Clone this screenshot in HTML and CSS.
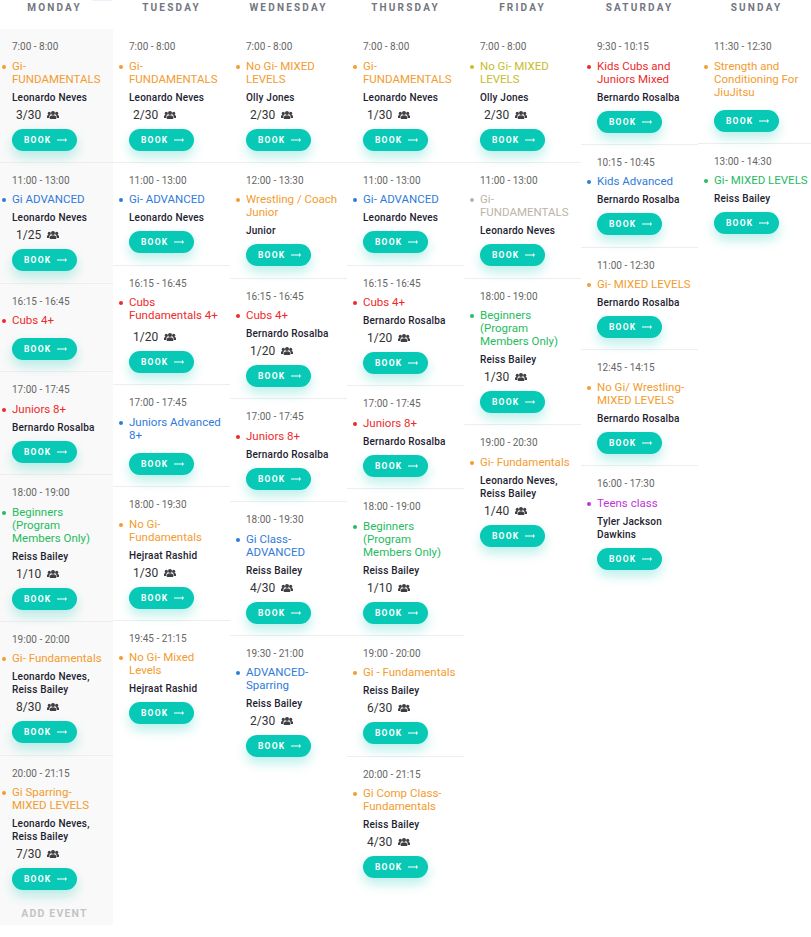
FILE: index.html
```html
<!DOCTYPE html>
<html lang="en">
<head>
<meta charset="utf-8">
<title>Timetable</title>
<link rel="stylesheet" href="styles.css">
</head>
<body>
<svg class="defs" width="0" height="0" aria-hidden="true">
<symbol id="users" viewBox="0 0 12 8"><circle cx="6" cy="2" r="2"/><circle cx="2.300" cy="2.400" r="1.600"/><circle cx="9.700" cy="2.400" r="1.600"/><path d="M2.800 8V6.200C2.800 4.900 4.200 4.200 6 4.200S9.200 4.900 9.200 6.200V8Z"/><path d="M0 7V5.400C0 4.500.9 4 2.300 4L3 4.300C2.500 4.800 2.300 5.300 2.300 5.900V7ZM12 7V5.400C12 4.500 11.100 4 9.700 4L9 4.300C9.500 4.800 9.700 5.300 9.700 5.900V7Z"/></symbol>
<symbol id="arrow" viewBox="0 0 10 6"><path d="M0 2.500h8V1L10 3 8 5V3.500H0Z"/></symbol>
</svg>
<div class="tab"></div>
<main class="timetable">

<section class="day day-shaded">
<h2 class="day-name">Monday</h2>
<div class="events">
<article class="event"><p class="time">7:00 - 8:00</p><h3 class="title orange">Gi- FUNDAMENTALS</h3><p class="teacher">Leonardo Neves</p><p class="cap">3/30 <svg class="ico"><use href="#users"/></svg></p><a class="book">BOOK <svg class="arr"><use href="#arrow"/></svg></a></article>
<article class="event"><p class="time">11:00 - 13:00</p><h3 class="title blue">Gi ADVANCED</h3><p class="teacher">Leonardo Neves</p><p class="cap">1/25 <svg class="ico"><use href="#users"/></svg></p><a class="book">BOOK <svg class="arr"><use href="#arrow"/></svg></a></article>
<article class="event"><p class="time">16:15 - 16:45</p><h3 class="title red">Cubs 4+</h3><a class="book">BOOK <svg class="arr"><use href="#arrow"/></svg></a></article>
<article class="event"><p class="time">17:00 - 17:45</p><h3 class="title red">Juniors 8+</h3><p class="teacher">Bernardo Rosalba</p><a class="book">BOOK <svg class="arr"><use href="#arrow"/></svg></a></article>
<article class="event"><p class="time">18:00 - 19:00</p><h3 class="title green">Beginners (Program Members Only)</h3><p class="teacher">Reiss Bailey</p><p class="cap">1/10 <svg class="ico"><use href="#users"/></svg></p><a class="book">BOOK <svg class="arr"><use href="#arrow"/></svg></a></article>
<article class="event"><p class="time">19:00 - 20:00</p><h3 class="title orange">Gi- Fundamentals</h3><p class="teacher">Leonardo Neves, Reiss Bailey</p><p class="cap">8/30 <svg class="ico"><use href="#users"/></svg></p><a class="book">BOOK <svg class="arr"><use href="#arrow"/></svg></a></article>
<article class="event event-last"><p class="time">20:00 - 21:15</p><h3 class="title orange">Gi Sparring- MIXED LEVELS</h3><p class="teacher">Leonardo Neves, Reiss Bailey</p><p class="cap">7/30 <svg class="ico"><use href="#users"/></svg></p><a class="book">BOOK <svg class="arr"><use href="#arrow"/></svg></a></article>
</div>
<p class="add">ADD EVENT</p>
</section>

<section class="day">
<h2 class="day-name">Tuesday</h2>
<div class="events">
<article class="event"><p class="time">7:00 - 8:00</p><h3 class="title orange">Gi- FUNDAMENTALS</h3><p class="teacher">Leonardo Neves</p><p class="cap">2/30 <svg class="ico"><use href="#users"/></svg></p><a class="book">BOOK <svg class="arr"><use href="#arrow"/></svg></a></article>
<article class="event"><p class="time">11:00 - 13:00</p><h3 class="title blue">Gi- ADVANCED</h3><p class="teacher">Leonardo Neves</p><a class="book">BOOK <svg class="arr"><use href="#arrow"/></svg></a></article>
<article class="event"><p class="time">16:15 - 16:45</p><h3 class="title red">Cubs Fundamentals 4+</h3><p class="cap">1/20 <svg class="ico"><use href="#users"/></svg></p><a class="book">BOOK <svg class="arr"><use href="#arrow"/></svg></a></article>
<article class="event"><p class="time">17:00 - 17:45</p><h3 class="title blue">Juniors Advanced 8+</h3><a class="book">BOOK <svg class="arr"><use href="#arrow"/></svg></a></article>
<article class="event"><p class="time">18:00 - 19:30</p><h3 class="title orange">No Gi- Fundamentals</h3><p class="teacher">Hejraat Rashid</p><p class="cap">1/30 <svg class="ico"><use href="#users"/></svg></p><a class="book">BOOK <svg class="arr"><use href="#arrow"/></svg></a></article>
<article class="event event-last"><p class="time">19:45 - 21:15</p><h3 class="title orange">No Gi- Mixed Levels</h3><p class="teacher">Hejraat Rashid</p><a class="book">BOOK <svg class="arr"><use href="#arrow"/></svg></a></article>
</div>
</section>

<section class="day">
<h2 class="day-name">Wednesday</h2>
<div class="events">
<article class="event"><p class="time">7:00 - 8:00</p><h3 class="title orange">No Gi- MIXED LEVELS</h3><p class="teacher">Olly Jones</p><p class="cap">2/30 <svg class="ico"><use href="#users"/></svg></p><a class="book">BOOK <svg class="arr"><use href="#arrow"/></svg></a></article>
<article class="event"><p class="time">12:00 - 13:30</p><h3 class="title orange">Wrestling / Coach Junior</h3><p class="teacher">Junior</p><a class="book">BOOK <svg class="arr"><use href="#arrow"/></svg></a></article>
<article class="event"><p class="time">16:15 - 16:45</p><h3 class="title red">Cubs 4+</h3><p class="teacher">Bernardo Rosalba</p><p class="cap">1/20 <svg class="ico"><use href="#users"/></svg></p><a class="book">BOOK <svg class="arr"><use href="#arrow"/></svg></a></article>
<article class="event"><p class="time">17:00 - 17:45</p><h3 class="title red">Juniors 8+</h3><p class="teacher">Bernardo Rosalba</p><a class="book">BOOK <svg class="arr"><use href="#arrow"/></svg></a></article>
<article class="event"><p class="time">18:00 - 19:30</p><h3 class="title blue">Gi Class- ADVANCED</h3><p class="teacher">Reiss Bailey</p><p class="cap">4/30 <svg class="ico"><use href="#users"/></svg></p><a class="book">BOOK <svg class="arr"><use href="#arrow"/></svg></a></article>
<article class="event event-last"><p class="time">19:30 - 21:00</p><h3 class="title blue">ADVANCED- Sparring</h3><p class="teacher">Reiss Bailey</p><p class="cap">2/30 <svg class="ico"><use href="#users"/></svg></p><a class="book">BOOK <svg class="arr"><use href="#arrow"/></svg></a></article>
</div>
</section>

<section class="day">
<h2 class="day-name">Thursday</h2>
<div class="events">
<article class="event"><p class="time">7:00 - 8:00</p><h3 class="title orange">Gi- FUNDAMENTALS</h3><p class="teacher">Leonardo Neves</p><p class="cap">1/30 <svg class="ico"><use href="#users"/></svg></p><a class="book">BOOK <svg class="arr"><use href="#arrow"/></svg></a></article>
<article class="event"><p class="time">11:00 - 13:00</p><h3 class="title blue">Gi- ADVANCED</h3><p class="teacher">Leonardo Neves</p><a class="book">BOOK <svg class="arr"><use href="#arrow"/></svg></a></article>
<article class="event"><p class="time">16:15 - 16:45</p><h3 class="title red">Cubs 4+</h3><p class="teacher">Bernardo Rosalba</p><p class="cap">1/20 <svg class="ico"><use href="#users"/></svg></p><a class="book">BOOK <svg class="arr"><use href="#arrow"/></svg></a></article>
<article class="event"><p class="time">17:00 - 17:45</p><h3 class="title red">Juniors 8+</h3><p class="teacher">Bernardo Rosalba</p><a class="book">BOOK <svg class="arr"><use href="#arrow"/></svg></a></article>
<article class="event"><p class="time">18:00 - 19:00</p><h3 class="title green">Beginners (Program Members Only)</h3><p class="teacher">Reiss Bailey</p><p class="cap">1/10 <svg class="ico"><use href="#users"/></svg></p><a class="book">BOOK <svg class="arr"><use href="#arrow"/></svg></a></article>
<article class="event"><p class="time">19:00 - 20:00</p><h3 class="title orange">Gi - Fundamentals</h3><p class="teacher">Reiss Bailey</p><p class="cap">6/30 <svg class="ico"><use href="#users"/></svg></p><a class="book">BOOK <svg class="arr"><use href="#arrow"/></svg></a></article>
<article class="event event-last"><p class="time">20:00 - 21:15</p><h3 class="title orange">Gi Comp Class- Fundamentals</h3><p class="teacher">Reiss Bailey</p><p class="cap">4/30 <svg class="ico"><use href="#users"/></svg></p><a class="book">BOOK <svg class="arr"><use href="#arrow"/></svg></a></article>
</div>
</section>

<section class="day">
<h2 class="day-name">Friday</h2>
<div class="events">
<article class="event"><p class="time">7:00 - 8:00</p><h3 class="title olive">No Gi- MIXED LEVELS</h3><p class="teacher">Olly Jones</p><p class="cap">2/30 <svg class="ico"><use href="#users"/></svg></p><a class="book">BOOK <svg class="arr"><use href="#arrow"/></svg></a></article>
<article class="event"><p class="time">11:00 - 13:00</p><h3 class="title stone">Gi- FUNDAMENTALS</h3><p class="teacher">Leonardo Neves</p><a class="book">BOOK <svg class="arr"><use href="#arrow"/></svg></a></article>
<article class="event"><p class="time">18:00 - 19:00</p><h3 class="title green">Beginners (Program Members Only)</h3><p class="teacher">Reiss Bailey</p><p class="cap">1/30 <svg class="ico"><use href="#users"/></svg></p><a class="book">BOOK <svg class="arr"><use href="#arrow"/></svg></a></article>
<article class="event event-last"><p class="time">19:00 - 20:30</p><h3 class="title orange">Gi- Fundamentals</h3><p class="teacher">Leonardo Neves, Reiss Bailey</p><p class="cap">1/40 <svg class="ico"><use href="#users"/></svg></p><a class="book">BOOK <svg class="arr"><use href="#arrow"/></svg></a></article>
</div>
</section>

<section class="day">
<h2 class="day-name">Saturday</h2>
<div class="events">
<article class="event"><p class="time">9:30 - 10:15</p><h3 class="title red">Kids Cubs and Juniors Mixed</h3><p class="teacher">Bernardo Rosalba</p><a class="book">BOOK <svg class="arr"><use href="#arrow"/></svg></a></article>
<article class="event"><p class="time">10:15 - 10:45</p><h3 class="title blue">Kids Advanced</h3><p class="teacher">Bernardo Rosalba</p><a class="book">BOOK <svg class="arr"><use href="#arrow"/></svg></a></article>
<article class="event"><p class="time">11:00 - 12:30</p><h3 class="title orange">Gi- MIXED LEVELS</h3><p class="teacher">Bernardo Rosalba</p><a class="book">BOOK <svg class="arr"><use href="#arrow"/></svg></a></article>
<article class="event"><p class="time">12:45 - 14:15</p><h3 class="title orange">No Gi/ Wrestling- MIXED LEVELS</h3><p class="teacher">Bernardo Rosalba</p><a class="book">BOOK <svg class="arr"><use href="#arrow"/></svg></a></article>
<article class="event event-last"><p class="time">16:00 - 17:30</p><h3 class="title purple">Teens class</h3><p class="teacher">Tyler Jackson Dawkins</p><a class="book">BOOK <svg class="arr"><use href="#arrow"/></svg></a></article>
</div>
</section>

<section class="day">
<h2 class="day-name">Sunday</h2>
<div class="events">
<article class="event"><p class="time">11:30 - 12:30</p><h3 class="title orange">Strength and Conditioning For JiuJitsu</h3><a class="book">BOOK <svg class="arr"><use href="#arrow"/></svg></a></article>
<article class="event event-last"><p class="time">13:00 - 14:30</p><h3 class="title green">Gi- MIXED LEVELS</h3><p class="teacher">Reiss Bailey</p><a class="book">BOOK <svg class="arr"><use href="#arrow"/></svg></a></article>
</div>
</section>

</main>
</body>
</html>
```
FILE: styles.css
```css
html, body { margin: 0; padding: 0; background: #fff; overflow-x: hidden; }
body { font-family: Roboto, "Liberation Sans", sans-serif; color: #222; }
.defs { position: absolute; }
.tab { position: absolute; left: 92px; top: 0; width: 20px; height: 1px; border-radius: 0 0 4px 4px; background: #eef0fb; }
.timetable { display: grid; grid-template-columns: repeat(7, 117px); width: 819px; margin-left: -4px; align-items: start; }
.day-name { margin: 0; height: 29px; padding-top: 2px; box-sizing: border-box; text-align: center; font-size: 10px; line-height: 12px; font-weight: 700; letter-spacing: 2.2px; text-transform: uppercase; color: #73767f; }
.events { display: flex; flex-direction: column; }
.day-shaded .events, .day-shaded .add { background: #f9f9f9; }
.day-shaded { margin-bottom: 12px; }
.event { padding: 11px 6px 11.25px 16px; border-bottom: 1px solid #eee; }
.event-last { border-bottom: 0; }
.time { margin: 0 0 6.5px; font-size: 10px; line-height: 13px; color: #666; }
.title { position: relative; margin: 0 0 5px; font-size: 11.5px; line-height: 13px; font-weight: 400; }
.title::before { content: ""; position: absolute; left: -10px; top: 5px; width: 4px; height: 4px; border-radius: 50%; background: currentColor; }
.orange { color: #f39c2f; } .blue { color: #2f7bd9; } .red { color: #ee2b2b; } .green { color: #27bb5f; }
.olive { color: #c6bd2c; } .stone { color: #bcb4a9; } .purple { color: #bf36d6; }
.teacher { margin: 0 0 3px; font-size: 10px; line-height: 13px; font-weight: 500; letter-spacing: .2px; color: #1d2230; }
.cap { margin: 0 0 6px 4px; font-size: 12px; line-height: 16px; color: #333; display: flex; align-items: center; gap: 6px; }
.title + .cap { margin-top: 7px; }
.ico { width: 12px; height: 8px; fill: #3f3f44; }
.book { display: flex; width: 65px; height: 22px; box-sizing: border-box; padding-left: 12px; align-items: center; gap: 6px; border-radius: 11px; background: #07c9b5; color: #fff; font-size: 8.5px; font-weight: 700; letter-spacing: 1.2px; box-shadow: 0 6px 12px rgba(7,201,181,.28); }
.teacher + .book { margin-top: 7px; }
.title + .book { margin-top: 11px; }
.arr { width: 10px; height: 6px; fill: #fff; }
.add { margin: 0; padding: 6px 0 4.5px; text-align: center; font-size: 10.5px; line-height: 13px; font-weight: 700; letter-spacing: 1.2px; color: #c4c4c8; }
```
